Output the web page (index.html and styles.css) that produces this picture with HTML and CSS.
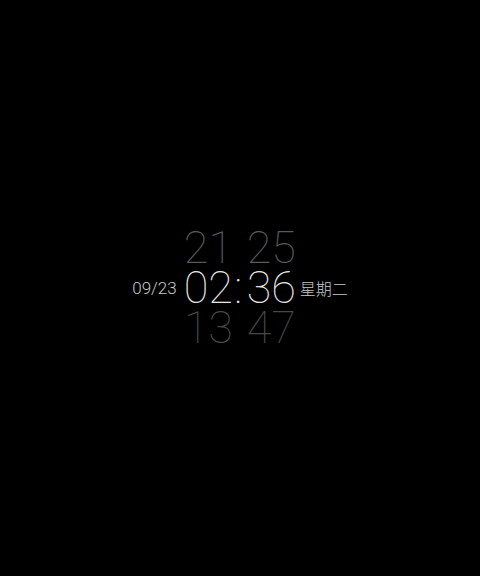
FILE: index.html
```html
<!DOCTYPE html>
<html>
<head>
<meta charset="utf-8">
<link rel="stylesheet" href="styles.css">
</head>
<body>
<div class="screen">
  <div class="clock">
    <div class="date">09/23</div>
    <div class="wheel">
      <div class="row prev"><span class="h">21</span><span class="c"></span><span class="m">25</span></div>
      <div class="row now"><span class="h">02</span><span class="c">:</span><span class="m">36</span></div>
      <div class="row next"><span class="h">13</span><span class="c"></span><span class="m">47</span></div>
    </div>
    <div class="week">星期二</div>
  </div>
</div>
</body>
</html>
```
FILE: styles.css
```css
html, body { margin: 0; padding: 0; background: #000; }
.screen {
  width: 480px; height: 576px;
  display: flex; align-items: center; justify-content: center;
  font-family: Roboto, "Noto Sans CJK SC", sans-serif;
}
.clock { display: flex; align-items: center; gap: 7px; }
.wheel { display: flex; flex-direction: column; }
.row {
  display: grid; grid-template-columns: 46px 17px 46px;
  font-size: 45px; font-weight: 100; line-height: 40px; height: 40px;
}
.h { text-align: right; }
.m { text-align: left; }
.c { text-align: center; }
.prev { color: #5a5a5a; }
.now { color: #e6e6e6; }
.next { color: #484848; }
.date { color: #c8c8c8; font-size: 17px; font-weight: 300; }
.week { color: #c8c8c8; font-size: 16px; font-weight: 300; font-family: "Noto Sans CJK SC", sans-serif; }
```
